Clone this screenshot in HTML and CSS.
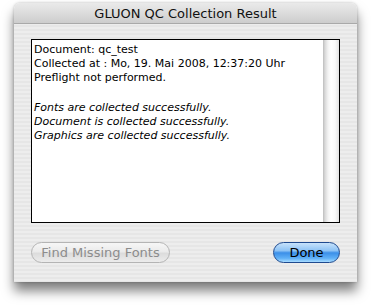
FILE: index.html
```html
<!DOCTYPE html>
<html>
<head>
<meta charset="utf-8">
<link rel="stylesheet" href="styles.css">
</head>
<body>
<div class="window">
  <div class="titlebar">GLUON QC Collection Result</div>
  <div class="content">
    <div class="textbox">
      <div class="text">
        <p class="line">Document: qc_test</p>
        <p class="line">Collected at : Mo, 19. Mai 2008, 12:37:20 Uhr</p>
        <p class="line">Preflight not performed.</p>
        <p class="line blank">&nbsp;</p>
        <p class="line it">Fonts are collected successfully.</p>
        <p class="line it">Document is collected successfully.</p>
        <p class="line it">Graphics are collected successfully.</p>
      </div>
      <div class="scrollbar"></div>
    </div>
    <div class="buttons">
      <div class="btn disabled">Find Missing Fonts</div>
      <div class="btn default">Done</div>
    </div>
  </div>
</div>
</body>
</html>
```

FILE: styles.css
```css
html, body {
  margin: 0;
  padding: 0;
  background: #ffffff;
}
body {
  width: 371px;
  height: 305px;
  overflow: hidden;
  font-family: "DejaVu Sans", "Liberation Sans", sans-serif;
}
.window {
  margin: 3px 0 0 14px;
  width: 343px;
  height: 279px;
  display: flex;
  flex-direction: column;
  border-radius: 6px 6px 0 0;
  background: repeating-linear-gradient(to bottom, #ededed 0px, #ededed 2px, #e6e6e6 2px, #e6e6e6 4px);
  box-shadow: 0 9px 12px rgba(0,0,0,0.5), 0 0 3px rgba(0,0,0,0.25);
  overflow: hidden;
}
.titlebar {
  height: 20px;
  flex: none;
  text-align: center;
  font-size: 13px;
  line-height: 21px;
  color: #111;
  background: linear-gradient(to bottom, #eaeaea 0%, #dcdcdc 50%, #cdcdcd 100%);
  border-bottom: 1px solid #a9a9a9;
  border-radius: 6px 6px 0 0;
}
.content {
  flex: 1;
  display: flex;
  flex-direction: column;
  padding: 15px 17px 0 17px;
}
.textbox {
  height: 182px;
  border: 1px solid #000;
  background: #fff;
  display: flex;
}
.text {
  flex: 1;
  padding: 3px 0 0 2px;
  font-size: 11px;
  color: #000;
}
.line {
  margin: 0;
  line-height: 14px;
  white-space: nowrap;
}
.blank {
  height: 16px;
}
.it {
  font-style: italic;
}
.scrollbar {
  width: 16px;
  flex: none;
  background: linear-gradient(to right, #bdbdbd 0px, #d9d9d9 2px, #f2f2f2 5px, #ffffff 8px, #fafafa 12px, #e3e3e3 16px);
}
.buttons {
  display: flex;
  justify-content: space-between;
  margin-top: 19px;
}
.btn {
  height: 19px;
  border-radius: 11px;
  font-size: 13px;
  line-height: 19px;
  text-align: center;
}
.disabled {
  width: 137px;
  color: #8c8c8c;
  border: 1px solid #b4b4b4;
  background: linear-gradient(to bottom, #f6f6f6 0%, #ebebeb 45%, #dcdcdc 55%, #ececec 100%);
}
.default {
  width: 65px;
  color: #000;
  border: 1px solid #1f4a8f;
  background: linear-gradient(to bottom, #c7e2fb 0%, #8ec3f5 40%, #3b8fe8 52%, #5fb0f7 80%, #a8dcff 100%);
}
```
